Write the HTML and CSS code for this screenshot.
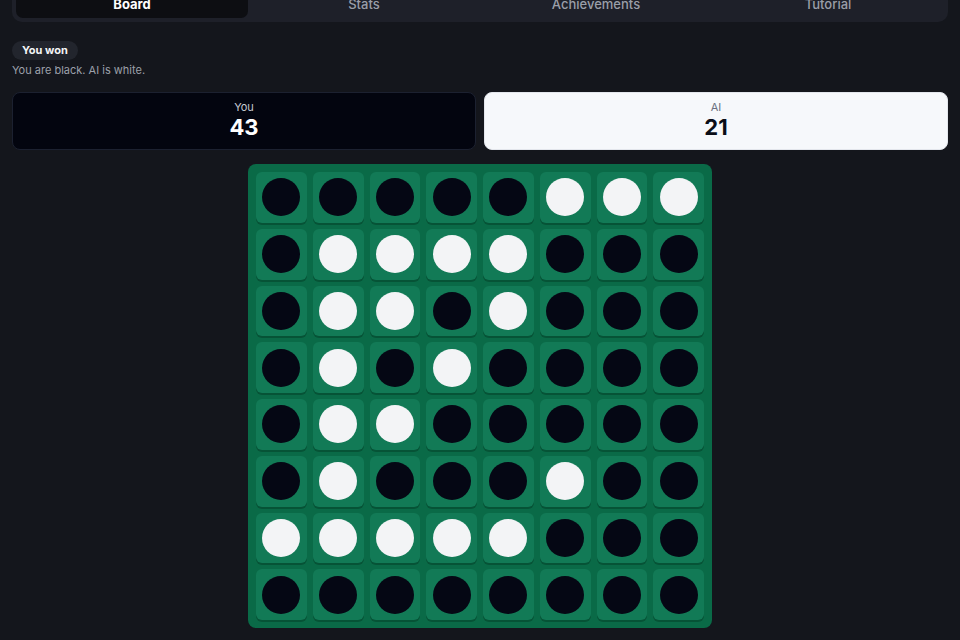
FILE: index.html
```html
<!DOCTYPE html>
<html lang="en">
<head>
<meta charset="utf-8">
<title>Reversi</title>
<link rel="stylesheet" href="styles.css">
</head>
<body>
<div class="app">
  <nav class="tabs">
    <button class="tab active">Board</button>
    <button class="tab">Stats</button>
    <button class="tab">Achievements</button>
    <button class="tab">Tutorial</button>
  </nav>

  <section class="status">
    <span class="badge">You won</span>
    <p class="hint">You are black. AI is white.</p>
  </section>

  <section class="scores">
    <div class="score dark">
      <span class="label">You</span>
      <span class="value">43</span>
    </div>
    <div class="score light">
      <span class="label">AI</span>
      <span class="value">21</span>
    </div>
  </section>

  <div class="board">
    <div class="cell"><i class="disc b"></i></div><div class="cell"><i class="disc b"></i></div><div class="cell"><i class="disc b"></i></div><div class="cell"><i class="disc b"></i></div><div class="cell"><i class="disc b"></i></div><div class="cell"><i class="disc w"></i></div><div class="cell"><i class="disc w"></i></div><div class="cell"><i class="disc w"></i></div>
    <div class="cell"><i class="disc b"></i></div><div class="cell"><i class="disc w"></i></div><div class="cell"><i class="disc w"></i></div><div class="cell"><i class="disc w"></i></div><div class="cell"><i class="disc w"></i></div><div class="cell"><i class="disc b"></i></div><div class="cell"><i class="disc b"></i></div><div class="cell"><i class="disc b"></i></div>
    <div class="cell"><i class="disc b"></i></div><div class="cell"><i class="disc w"></i></div><div class="cell"><i class="disc w"></i></div><div class="cell"><i class="disc b"></i></div><div class="cell"><i class="disc w"></i></div><div class="cell"><i class="disc b"></i></div><div class="cell"><i class="disc b"></i></div><div class="cell"><i class="disc b"></i></div>
    <div class="cell"><i class="disc b"></i></div><div class="cell"><i class="disc w"></i></div><div class="cell"><i class="disc b"></i></div><div class="cell"><i class="disc w"></i></div><div class="cell"><i class="disc b"></i></div><div class="cell"><i class="disc b"></i></div><div class="cell"><i class="disc b"></i></div><div class="cell"><i class="disc b"></i></div>
    <div class="cell"><i class="disc b"></i></div><div class="cell"><i class="disc w"></i></div><div class="cell"><i class="disc w"></i></div><div class="cell"><i class="disc b"></i></div><div class="cell"><i class="disc b"></i></div><div class="cell"><i class="disc b"></i></div><div class="cell"><i class="disc b"></i></div><div class="cell"><i class="disc b"></i></div>
    <div class="cell"><i class="disc b"></i></div><div class="cell"><i class="disc w"></i></div><div class="cell"><i class="disc b"></i></div><div class="cell"><i class="disc b"></i></div><div class="cell"><i class="disc b"></i></div><div class="cell"><i class="disc w"></i></div><div class="cell"><i class="disc b"></i></div><div class="cell"><i class="disc b"></i></div>
    <div class="cell"><i class="disc w"></i></div><div class="cell"><i class="disc w"></i></div><div class="cell"><i class="disc w"></i></div><div class="cell"><i class="disc w"></i></div><div class="cell"><i class="disc w"></i></div><div class="cell"><i class="disc b"></i></div><div class="cell"><i class="disc b"></i></div><div class="cell"><i class="disc b"></i></div>
    <div class="cell"><i class="disc b"></i></div><div class="cell"><i class="disc b"></i></div><div class="cell"><i class="disc b"></i></div><div class="cell"><i class="disc b"></i></div><div class="cell"><i class="disc b"></i></div><div class="cell"><i class="disc b"></i></div><div class="cell"><i class="disc b"></i></div><div class="cell"><i class="disc b"></i></div>
  </div>
</div>
</body>
</html>
```

FILE: styles.css
```css
* { box-sizing: border-box; }

html, body {
  margin: 0;
  background: #14161c;
  color: #f3f4f6;
  font-family: Inter, "Noto Sans", "Liberation Sans", sans-serif;
  overflow: hidden;
}

.app {
  display: flex;
  flex-direction: column;
  padding: 0 12px;
}

/* tab strip, page scrolled so its top edge sits above the viewport */
.tabs {
  display: grid;
  grid-template-columns: repeat(4, 1fr);
  margin-top: -14px;
  padding: 4px;
  background: #1e2029;
  border-radius: 10px;
}

.tab {
  height: 28px;
  border: 0;
  border-radius: 7px;
  background: transparent;
  color: #9a9ea8;
  font: 500 13px/28px Inter, "Noto Sans", sans-serif;
  padding: 0;
}

.tab.active {
  background: #0d0e12;
  color: #ffffff;
  font-weight: 700;
}

.status {
  display: flex;
  flex-direction: column;
  align-items: flex-start;
  margin-top: 19px;
}

.badge {
  background: #22252d;
  color: #f5f5f7;
  font-size: 11px;
  font-weight: 700;
  line-height: 19px;
  padding: 0 10px;
  border-radius: 10px;
}

.hint {
  margin: 3px 0 0;
  color: #9ca0aa;
  font-size: 11px;
  line-height: 15px;
}

.scores {
  display: grid;
  grid-template-columns: 1fr 1fr;
  gap: 8px;
  margin-top: 14px;
}

.score {
  display: flex;
  flex-direction: column;
  align-items: center;
  padding: 7px 0 8px;
  border-radius: 8px;
  border: 1px solid;
}

.score .label {
  font-size: 11px;
  line-height: 14px;
}

.score .value {
  font-size: 22px;
  font-weight: 700;
  line-height: 27px;
}

.score.dark {
  background: #03050f;
  border-color: #1c2130;
}
.score.dark .label { color: #c6c9d1; }
.score.dark .value { color: #ffffff; }

.score.light {
  background: #f6f8fb;
  border-color: #e3e6ec;
}
.score.light .label { color: #6b7080; }
.score.light .value { color: #0a0d17; }

.board {
  align-self: center;
  width: 464px;
  height: 464px;
  margin-top: 14px;
  padding: 8px;
  display: grid;
  grid-template-columns: repeat(8, 1fr);
  grid-template-rows: repeat(8, 1fr);
  gap: 6px;
  background: #0a6a47;
  border-radius: 8px;
}

.cell {
  display: flex;
  align-items: center;
  justify-content: center;
  background: #127a56;
  border-radius: 6px;
  box-shadow: 0 2px 0 rgba(0, 40, 24, 0.35);
}

.disc {
  width: 38px;
  height: 38px;
  border-radius: 50%;
}

.disc.b { background: #050714; }
.disc.w { background: #f3f4f6; }
```
